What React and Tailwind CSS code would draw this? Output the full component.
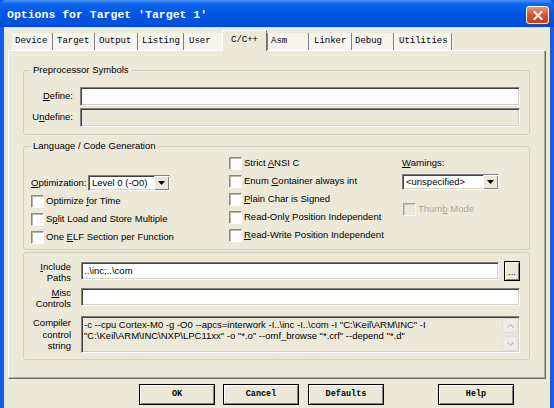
import React from 'react';

const sunken =
  'border border-t-[#808080] border-l-[#808080] border-b-white border-r-white shadow-[inset_1px_1px_0_#404040,inset_-1px_-1px_0_#d4d0c8]';
const raised =
  'border border-black bg-[#ECE9D8] shadow-[inset_1px_1px_0_#fff,inset_-1px_-1px_0_#808080]';

function CheckBox({ disabled }) {
  return (
    <span
      className={`block w-[13px] h-[13px] shrink-0 border border-t-[#8a8a8a] border-l-[#8a8a8a] border-b-white border-r-white shadow-[inset_1px_1px_0_#b8b6ab] ${
        disabled ? 'bg-[#ECE9D8] opacity-70' : 'bg-white'
      }`}
    />
  );
}

function Check({ children, disabled }) {
  return (
    <div className="flex items-center h-[18px]">
      <CheckBox disabled={disabled} />
      <span className={`ml-[2px] whitespace-nowrap ${disabled ? 'text-[#ACA899]' : ''}`}>{children}</span>
    </div>
  );
}

function Combo({ value, className }) {
  return (
    <div className={`flex items-stretch bg-white ${sunken} ${className}`}>
      <span className="flex-1 pl-[3px] leading-[14px] whitespace-nowrap overflow-hidden">{value}</span>
      <span className={`w-[15px] flex items-center justify-center ${raised} border-0 shadow-[inset_1px_1px_0_#fff,inset_-1px_-1px_0_#404040]`}>
        <svg width="7" height="4" viewBox="0 0 7 4">
          <path d="M0 0h7L3.5 4z" fill="#000" />
        </svg>
      </span>
    </div>
  );
}

function U({ children }) {
  return <span className="underline underline-offset-[1px]">{children}</span>;
}

function Tab({ label, w, pl }) {
  return (
    <>
      <div className={`h-[17px] flex items-center bg-[#F5F4EE] ${w} ${pl}`}>{label}</div>
    </>
  );
}

function Sep() {
  return <div className="h-[17px] w-[2px] bg-[#F5F4EE] border-l border-[#808080]" />;
}

function Button({ children, className }) {
  return (
    <button
      className={`h-[21px] w-[76px] ${raised} font-['Liberation_Mono',monospace] text-[8.5px] font-bold text-black ${className}`}
    >
      {children}
    </button>
  );
}

export default function App() {
  return (
    <div className="w-[554px] h-[408px] flex flex-col overflow-hidden bg-[#0d55dc] font-['Liberation_Sans',Arial,sans-serif] text-[9.5px] text-black">
      {/* Title bar */}
      <div className="h-[27px] shrink-0 flex items-center bg-[linear-gradient(to_bottom,#4a94f8_0%,#1064ec_14%,#0056e4_50%,#0052dd_85%,#0046c8_100%)] rounded-t-[6px]">
        <span className="ml-[7px] mt-[2px] font-['Liberation_Mono',monospace] font-bold text-[11.5px] text-white whitespace-nowrap">
          Options for Target 'Target 1'
        </span>
        <div className="ml-auto mr-[5px] mt-[3px] w-[23px] h-[18px] rounded-[3px] border border-white bg-[linear-gradient(to_bottom,#f0977a,#e0542c_45%,#c9401c)] flex items-center justify-center">
          <svg width="10" height="9" viewBox="0 0 10 9">
            <path d="M1.5 1l7 7M8.5 1l-7 7" stroke="#fff" strokeWidth="2" strokeLinecap="square" />
          </svg>
        </div>
      </div>

      <div className="flex-1 flex">
        <div className="w-[4px] bg-[#1a5fe0]" />
        <div className="flex-1 bg-[#ECE9D8] flex flex-col">
          {/* Tabs */}
          <div className="h-[23px] shrink-0 flex items-end pl-[8px] font-['Liberation_Mono',monospace] text-[9px]">
            <Tab label="Device" w="w-[40px]" pl="pl-[3px]" />
            <Sep />
            <Tab label="Target" w="w-[40px]" pl="pl-[3px]" />
            <Sep />
            <Tab label="Output" w="w-[41px]" pl="pl-[3px]" />
            <Sep />
            <Tab label="Listing" w="w-[44px]" pl="pl-[3px]" />
            <Sep />
            <Tab label="User" w="w-[37px]" pl="pl-[4px]" />
            <div className="relative z-10 -mb-[1px] h-[21px] w-[45px] flex items-center justify-center bg-[#ECE9D8] border-t border-l border-white border-r border-r-[#716f64]">
              C/C++
            </div>
            <Sep />
            <Tab label="Asm" w="w-[39px]" pl="pl-[2px]" />
            <Sep />
            <Tab label="Linker" w="w-[41px]" pl="pl-[4px]" />
            <Sep />
            <Tab label="Debug" w="w-[40px]" pl="pl-[2px]" />
            <Sep />
            <Tab label="Utilities" w="w-[56px]" pl="pl-[4px]" />
            <Sep />
          </div>

          {/* Panel */}
          <div className="mx-[4px] h-[329px] shrink-0 flex flex-col border border-t-white border-l-white border-r-[#716f64] border-b-[#716f64] shadow-[inset_-1px_-1px_0_#aca899]">
            <div className="ml-[14px] mr-[15px] mt-[13px] flex flex-col">
              {/* Preprocessor Symbols */}
              <fieldset className="border border-[#D0D0BF] rounded-[3px] pr-[9px] pb-[7px]">
                <legend className="ml-[7px] px-[2px] leading-[12px]">Preprocessor Symbols</legend>
                <div className="pt-[11px] flex flex-col gap-[2px]">
                  <div className="flex items-center">
                    <span className="w-[49px] text-right">
                      <U>D</U>efine:
                    </span>
                    <div className={`ml-[7px] flex-1 h-[19px] bg-white ${sunken}`} />
                  </div>
                  <div className="flex items-center">
                    <span className="w-[49px] text-right">
                      U<U>n</U>define:
                    </span>
                    <div className={`ml-[7px] flex-1 h-[19px] bg-[#ECE9D8] ${sunken}`} />
                  </div>
                </div>
              </fieldset>

              {/* Language / Code Generation */}
              <fieldset className="mt-[5px] border border-[#D0D0BF] rounded-[3px] pb-[3px]">
                <legend className="ml-[7px] px-[2px] leading-[12px]">Language / Code Generation</legend>
                <div className="pt-[2px] flex">
                  <div className="pl-[7px] w-[205px] pt-[20px] flex flex-col">
                    <div className="flex items-center h-[18px]">
                      <span className="w-[57px] whitespace-nowrap">
                        <U>O</U>ptimization:
                      </span>
                      <Combo value="Level 0 (-O0)" className="w-[82px] h-[16px]" />
                    </div>
                    <Check>
                      Optimize <U>f</U>or Time
                    </Check>
                    <Check>
                      S<U>p</U>lit Load and Store Multiple
                    </Check>
                    <Check>
                      One <U>E</U>LF Section per Function
                    </Check>
                  </div>
                  <div className="w-[173px] flex flex-col">
                    <Check>
                      Strict <U>A</U>NSI C
                    </Check>
                    <Check>
                      Enum <U>C</U>ontainer always int
                    </Check>
                    <Check>
                      <U>P</U>lain Char is Signed
                    </Check>
                    <Check>
                      Read-Onl<U>y</U> Position Independent
                    </Check>
                    <Check>
                      <U>R</U>ead-Write Position Independent
                    </Check>
                  </div>
                  <div className="flex flex-col">
                    <div className="h-[18px] flex items-center">
                      <span>
                        <U>W</U>arnings:
                      </span>
                    </div>
                    <Combo value="<unspecified>" className="mt-[2px] w-[97px] h-[16px]" />
                    <div className="mt-[10px] pl-[1px]">
                      <Check disabled>
                        Thum<U>b</U> Mode
                      </Check>
                    </div>
                  </div>
                </div>
              </fieldset>

              {/* Paths / controls */}
              <div className="mt-[2px] border border-[#D0D0BF] rounded-[3px] pt-[8px] pr-[9px] pb-[6px] flex flex-col">
                <div className="flex items-start">
                  <div className="w-[47px] text-right leading-[11px]">
                    <div>
                      <U>I</U>nclude
                    </div>
                    <div>Paths</div>
                  </div>
                  <div className={`ml-[10px] mt-[1px] flex-1 h-[18px] bg-white ${sunken} pl-[2px] leading-[15px]`}>
                    ..\inc;..\com
                  </div>
                  <div className={`ml-[5px] w-[16px] h-[20px] ${raised} flex items-end justify-center pb-[4px] leading-none`}>
                    ...
                  </div>
                </div>
                <div className="mt-[4px] flex items-start">
                  <div className="w-[47px] text-right leading-[11px]">
                    <div>
                      <U>M</U>isc
                    </div>
                    <div>Controls</div>
                  </div>
                  <div className={`ml-[10px] mt-[1px] flex-1 h-[18px] bg-white ${sunken}`} />
                </div>
                <div className="mt-[7px] flex items-start">
                  <div className="w-[47px] text-right leading-[11.5px] pt-[1px]">
                    <div>Compiler</div>
                    <div>control</div>
                    <div>string</div>
                  </div>
                  <div className={`ml-[10px] flex-1 h-[37px] bg-[#ECE9D8] ${sunken} flex`}>
                    <div className="flex-1 pl-[2px] pt-[3px] leading-[10.5px] whitespace-nowrap overflow-hidden">
                      <div>-c --cpu Cortex-M0 -g -O0 --apcs=interwork -I..\inc -I..\com -I "C:\Keil\ARM\INC" -I</div>
                      <div>"C:\Keil\ARM\INC\NXP\LPC11xx" -o "*.o" --omf_browse "*.crf" --depend "*.d"</div>
                    </div>
                    <div className="w-[16px] mr-[1px] my-[1px] flex flex-col justify-between">
                      <div className="h-[15px] rounded-[2px] bg-[#eeede5] border border-[#e2e0d6] flex items-center justify-center">
                        <svg width="7" height="4" viewBox="0 0 7 4">
                          <path d="M0.5 3.5L3.5 0.5L6.5 3.5" stroke="#c5c2b2" strokeWidth="1.2" fill="none" />
                        </svg>
                      </div>
                      <div className="h-[15px] rounded-[2px] bg-[#eeede5] border border-[#e2e0d6] flex items-center justify-center">
                        <svg width="7" height="4" viewBox="0 0 7 4">
                          <path d="M0.5 0.5L3.5 3.5L6.5 0.5" stroke="#c5c2b2" strokeWidth="1.2" fill="none" />
                        </svg>
                      </div>
                    </div>
                  </div>
                </div>
              </div>
            </div>
          </div>

          {/* Buttons */}
          <div className="mt-[5px] flex pl-[135px]">
            <Button>OK</Button>
            <Button className="ml-[8px]">Cancel</Button>
            <Button className="ml-[9px]">Defaults</Button>
            <Button className="ml-[54px]">Help</Button>
          </div>
        </div>
        <div className="w-[4px] bg-[#1a5fe0]" />
      </div>
    </div>
  );
}
